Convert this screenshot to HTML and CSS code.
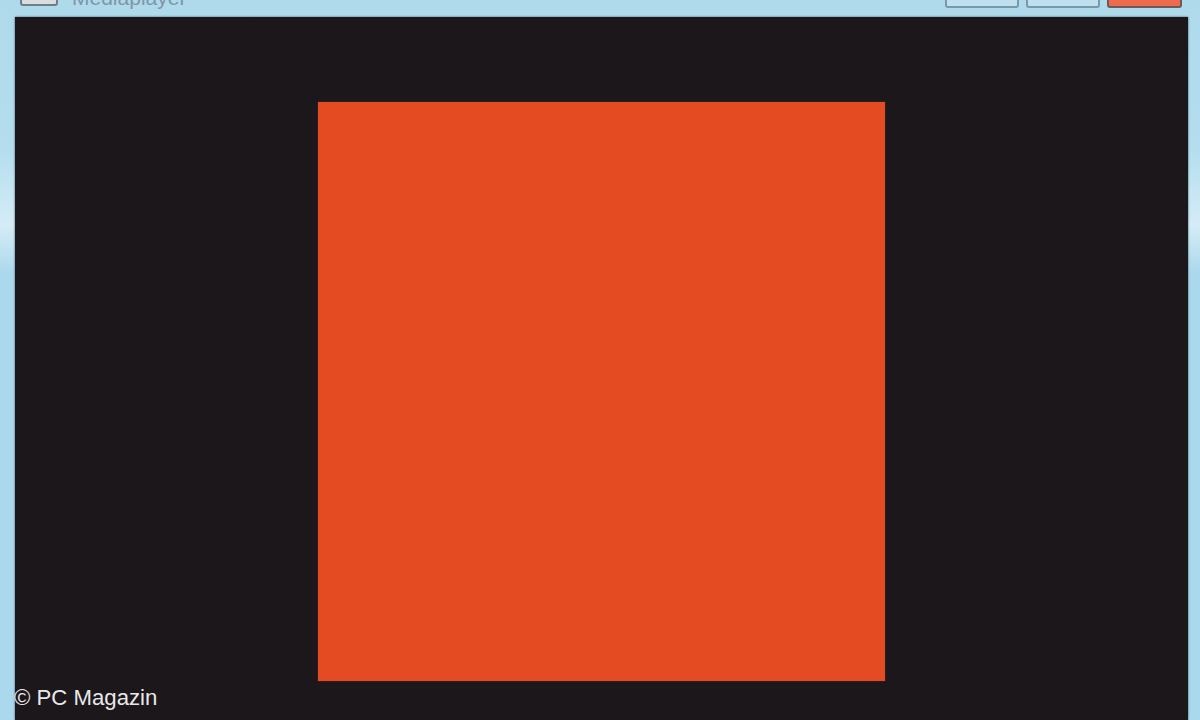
FILE: index.html
```html
<!DOCTYPE html>
<html lang="de">
<head>
    <meta charset="UTF-8">
    <meta name="viewport" content="width=device-width, initial-scale=1.0">
    <title>PC Magazin</title>
    <link rel="stylesheet" href="styles.css">
</head>
<body>
    <div class="window">
        <div class="titlebar">
            <div class="app-icon"></div>
            <div class="app-title">Mediaplayer</div>
            <div class="controls">
                <div class="control"></div>
                <div class="control"></div>
                <div class="control close"></div>
            </div>
        </div>
        <div class="stage">
            <div class="square"></div>
        </div>
    </div>
    <div class="credit">© PC Magazin</div>
</body>
</html>
```

FILE: styles.css
```css
* {
    margin: 0;
    padding: 0;
    box-sizing: border-box;
}

html, body {
    height: 100%;
    overflow: hidden;
}

body {
    font-family: 'Liberation Sans', Arial, sans-serif;
    background-color: #aed9ec;
    position: relative;
}

.window {
    height: 720px;
    display: flex;
    flex-direction: column;
    padding: 0 12px 0 15px;
    background: linear-gradient(to bottom, #aedaec 0, #b4deee 150px, #d4ecf6 225px, #c4e4f1 245px, #aad8ec 275px, #aad8ec 100%);
}

.titlebar {
    height: 17px;
    flex-shrink: 0;
    display: flex;
    align-items: flex-end;
    padding: 0 0 9px 5px;
    overflow: hidden;
}

.app-icon {
    width: 38px;
    height: 20px;
    flex-shrink: 0;
    margin-bottom: 2px;
    background-color: #d9dde0;
    border: 2px solid #6f7f8a;
    border-radius: 3px;
}

.app-title {
    margin-left: 14px;
    font-size: 21px;
    line-height: 21px;
    color: #7f97a5;
    white-space: nowrap;
}

.controls {
    margin-left: auto;
    display: flex;
    gap: 7px;
    margin-right: 6px;
}

.control {
    width: 74px;
    height: 20px;
    background-color: #bfe0ee;
    border: 2px solid #7c98a8;
    border-radius: 3px;
}

.control.close {
    width: 75px;
    background-color: #ee6a4c;
    border-color: #6b5a58;
}

.stage {
    flex: 1;
    background-color: #1b171b;
    display: flex;
    justify-content: center;
    align-items: flex-start;
    padding-top: 85px;
    box-shadow: 0 0 2px #3d5560;
}

.square {
    width: 567px;
    height: 579px;
    background-color: #e54b22;
    box-shadow: 0 0 1px #7a4030;
}

.credit {
    position: absolute;
    left: 14px;
    top: 686px;
    font-size: 22.2px;
    line-height: 24px;
    color: #e8e8e8;
}
```
